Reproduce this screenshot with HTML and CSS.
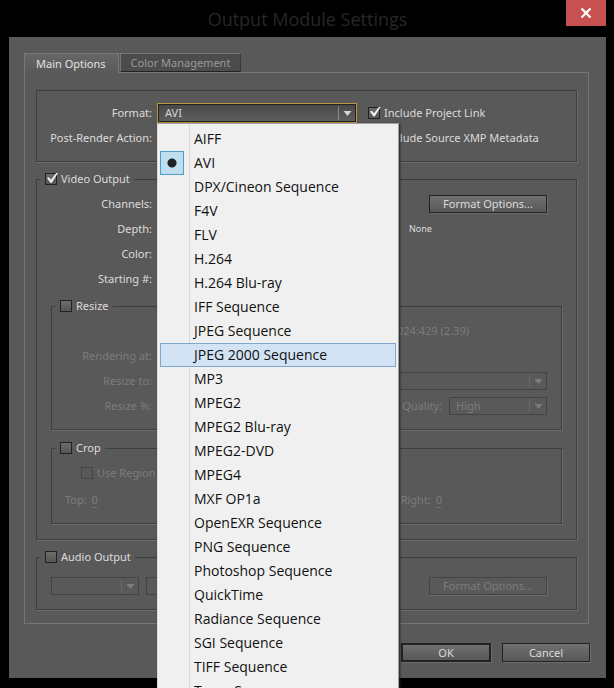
FILE: index.html
```html
<!DOCTYPE html>
<html lang="en">
<head>
<meta charset="utf-8">
<title>Output Module Settings</title>
<link rel="stylesheet" href="styles.css">
</head>
<body>
<svg class="defs" width="0" height="0" aria-hidden="true">
  <symbol id="arrow" viewBox="0 0 18 16">
    <path d="M0.5 1v14" stroke="currentColor" opacity=".4" fill="none"/>
    <path d="M5.5 6h8l-4 5z" fill="currentColor"/>
  </symbol>
</svg>
<main class="window">
  <header class="titlebar">
    <h1>Output Module Settings</h1>
    <button class="close" aria-label="Close">
      <svg width="12" height="10" viewBox="0 0 12 10"><path d="M1.5 0.5l9 9M10.5 0.5l-9 9" stroke="#fff" stroke-width="2.2"/></svg>
    </button>
  </header>
  <form class="dialog">
    <div class="tabs" role="tablist">
      <button type="button" class="tab active" role="tab" aria-selected="true">Main Options</button>
      <button type="button" class="tab" role="tab" aria-selected="false">Color Management</button>
    </div>
    <section class="panel">
      <div class="group first">
        <div class="row">
          <label class="name" for="format">Format:</label>
          <div class="picker">
            <div class="drop focus">
              <select id="format"><option>AVI</option></select>
              <svg class="arrow"><use href="#arrow"/></svg>
            </div>
            <ul class="menu">
              <li><button type="button">AIFF</button></li>
              <li><button type="button" class="current">AVI</button></li>
              <li><button type="button">DPX/Cineon Sequence</button></li>
              <li><button type="button">F4V</button></li>
              <li><button type="button">FLV</button></li>
              <li><button type="button">H.264</button></li>
              <li><button type="button">H.264 Blu-ray</button></li>
              <li><button type="button">IFF Sequence</button></li>
              <li><button type="button">JPEG Sequence</button></li>
              <li><button type="button" class="hover">JPEG 2000 Sequence</button></li>
              <li><button type="button">MP3</button></li>
              <li><button type="button">MPEG2</button></li>
              <li><button type="button">MPEG2 Blu-ray</button></li>
              <li><button type="button">MPEG2-DVD</button></li>
              <li><button type="button">MPEG4</button></li>
              <li><button type="button">MXF OP1a</button></li>
              <li><button type="button">OpenEXR Sequence</button></li>
              <li><button type="button">PNG Sequence</button></li>
              <li><button type="button">Photoshop Sequence</button></li>
              <li><button type="button">QuickTime</button></li>
              <li><button type="button">Radiance Sequence</button></li>
              <li><button type="button">SGI Sequence</button></li>
              <li><button type="button">TIFF Sequence</button></li>
              <li><button type="button">Targa Sequence</button></li>
            </ul>
          </div>
          <label class="check"><input type="checkbox" checked>Include Project Link</label>
        </div>
        <div class="row">
          <span class="name">Post-Render Action:</span>
          <div class="picker"></div>
          <label class="check"><input type="checkbox" checked>Include Source XMP Metadata</label>
        </div>
      </div>

      <fieldset class="group video">
        <legend><label class="check"><input type="checkbox" checked>Video Output</label></legend>
        <div class="row"><span class="name">Channels:</span><div class="side"><button type="button" class="btn wide">Format Options...</button></div></div>
        <div class="row"><span class="name">Depth:</span><div class="side small">None</div></div>
        <div class="row"><span class="name">Color:</span></div>
        <div class="row"><span class="name">Starting #:</span></div>

        <fieldset class="group inner resize">
          <legend><label class="check"><input type="checkbox">Resize</label></legend>
          <div class="row"><span class="ratio">1024:429 (2.39)</span></div>
          <div class="row"><span class="name">Rendering at:</span></div>
          <div class="row">
            <label class="name" for="size">Resize to:</label>
            <div class="drop fill"><select id="size" disabled><option></option></select><svg class="arrow"><use href="#arrow"/></svg></div>
          </div>
          <div class="row">
            <span class="name">Resize %:</span>
            <label class="quality" for="quality">Quality:</label>
            <div class="drop short"><select id="quality" disabled><option>High</option></select><svg class="arrow"><use href="#arrow"/></svg></div>
          </div>
        </fieldset>

        <fieldset class="group inner crop">
          <legend><label class="check"><input type="checkbox">Crop</label></legend>
          <div class="row region"><label class="check"><input type="checkbox" disabled>Use Region</label></div>
          <div class="row edges">
            <span>Top: <span class="value">0</span></span>
            <span>Right: <span class="value">0</span></span>
          </div>
        </fieldset>
      </fieldset>

      <fieldset class="group audio">
        <legend><label class="check"><input type="checkbox">Audio Output</label></legend>
        <div class="row">
          <div class="drop rate"><select disabled aria-label="Sample rate"><option></option></select><svg class="arrow"><use href="#arrow"/></svg></div>
          <div class="drop rate"><select disabled aria-label="Bit depth"><option></option></select></div>
          <div class="side"><button type="button" class="btn wide" disabled>Format Options...</button></div>
        </div>
      </fieldset>
    </section>
    <footer class="actions">
      <button type="button" class="btn default">OK</button>
      <button type="button" class="btn">Cancel</button>
    </footer>
  </form>
</main>
</body>
</html>
```
FILE: styles.css
```css
*, *::before, *::after { box-sizing: border-box; }

body {
  margin: 0;
  height: 100vh;
  overflow: hidden;
  background: #000;
  color: #dcdcdc;
  font: 11px/18px "Noto Sans", "Open Sans", sans-serif;
}

button, select, input { font: inherit; color: inherit; margin: 0; }
.defs { position: absolute; }

.window { padding: 0 8px 0 9px; }

.titlebar {
  position: relative;
  height: 37px;
  display: flex;
  align-items: center;
  justify-content: center;
}
h1 { margin: 0; font: 400 18px/24px "Open Sans", sans-serif; color: #272727; }
.close {
  position: absolute;
  top: 0;
  right: 0;
  width: 40px;
  height: 26px;
  padding: 0;
  border: 0;
  background: #c75050;
  display: grid;
  place-items: center;
}

.dialog { background: #595959; padding: 16px 16px 16px 15px; }

.tabs { display: flex; align-items: flex-start; gap: 1px; }
.tab {
  height: 19px;
  padding: 0 10px;
  border: 1px solid #777;
  border-color: #777 #3a3a3a #222 #777;
  background: #4c4c4c;
  color: #9a9a9a;
  line-height: 16px;
}
.tab.active {
  height: 20px;
  margin-bottom: -1px;
  padding: 0 12px 0 11px;
  position: relative;
  border-color: #777;
  border-bottom: 0;
  background: linear-gradient(#666, #595959);
  color: #e2e2e2;
}

.panel { margin-right: 1px; border: 1px solid #757575; padding: 17px 11px 13px; }

.group {
  margin: 0;
  min-width: 0;
  padding: 0;
  border: 1px solid #3e3e3e;
  box-shadow: 1px 1px 0 #6c6c6c;
}
.first { padding: 9px 0 11px; }
.video { margin-top: 8px; padding: 3px 14px 15px 14px; }
.video > .row { margin-left: -14px; padding-right: 15px; }
.inner { padding: 3px 14px 11px 0; color: #7c7c7c; }
.resize { margin-top: 6px; }
.crop { margin-top: 9px; }
.audio { margin-top: 8px; padding: 7px 29px 11px 14px; }

legend { margin-left: 3px; padding: 0 4px 0 5px; height: 18px; color: #dcdcdc; }
.video > legend, .audio > legend { margin-left: -11px; }

.row { display: flex; align-items: center; height: 25px; gap: 5px; }
.name { flex: 0 0 115px; text-align: right; white-space: nowrap; }
.inner .name { flex-basis: 100px; }
.picker { position: relative; flex: 0 0 200px; }

.check { display: flex; align-items: center; gap: 4px; white-space: nowrap; }
.picker + .check { margin-left: 6px; }
input[type="checkbox"] {
  appearance: none;
  width: 12px;
  height: 12px;
  border: 1px solid #222;
  background: linear-gradient(#6c6c6c, #565656);
  position: relative;
}
input[type="checkbox"]:checked::after {
  content: "";
  position: absolute;
  left: 1px;
  top: -1px;
  width: 11px;
  height: 10px;
  background: #eee;
  clip-path: polygon(0 50%, 18% 42%, 36% 68%, 84% 0, 100% 0, 42% 100%, 32% 100%);
}
input[type="checkbox"]:disabled { border-color: #454545; background: none; }

.drop { position: relative; color: #d6d6d6; }
.drop select {
  display: block;
  appearance: none;
  width: 100%;
  height: 18px;
  padding: 0 20px 0 6px;
  border: 1px solid #222;
  border-radius: 0;
  background: linear-gradient(#484848, #5e5e5e);
  line-height: 16px;
  opacity: 1;
}
.drop select:disabled { background: none; border-color: #434343; color: #7c7c7c; }
.drop:has(select:disabled) { color: #7c7c7c; }
.arrow { position: absolute; right: 0; top: 1px; width: 18px; height: 16px; pointer-events: none; }
.focus { outline: 1px solid #b8963c; outline-offset: 0; margin: 0 1px; }
.fill { flex: 1; }
.quality { margin-left: auto; }
.short { flex: 0 0 98px; margin-left: 2px; }
.rate { flex: 0 0 88px; }
.audio .row { gap: 7px; }

.side { margin-left: auto; flex: 0 0 138px; display: flex; justify-content: flex-end; }
.small { justify-content: flex-start; font-size: 9px; }
.ratio { margin-left: auto; padding-right: 78px; }
.region { padding-left: 29px; }
.edges { margin-top: 2px; padding: 0 105px 0 13px; justify-content: space-between; }
.value { border-bottom: 1px dotted #7c7c7c; margin-left: 2px; }

.btn {
  width: 88px;
  height: 19px;
  padding: 0;
  border: 1px solid #222;
  background: linear-gradient(#707070, #585858);
  box-shadow: 1px 1px 0 #6c6c6c;
  line-height: 16px;
}
.btn.wide { width: 118px; height: 18px; }
.btn:disabled { background: none; border-color: #434343; color: #7c7c7c; }
.btn.default { width: 90px; border-width: 2px; line-height: 14px; }
.actions { display: flex; justify-content: flex-end; gap: 11px; margin-top: 19px; }

.menu {
  position: absolute;
  z-index: 2;
  top: 100%;
  left: 0;
  width: 242px;
  margin: 1px 0 0;
  padding: 3px 2px;
  list-style: none;
  border: 1px solid #a0a0a0;
  border-left-color: #dadada;
  background: linear-gradient(90deg, transparent 31px, #dadada 31px, #dadada 32px, transparent 32px) #f0f0f0;
  box-shadow: 1px 1px 2px #222;
  color: #111;
  font: 14px/22px "Open Sans", sans-serif;
}
.menu button {
  position: relative;
  display: block;
  width: 100%;
  height: 24px;
  padding: 0 0 0 33px;
  border: 1px solid transparent;
  background: none;
  text-align: left;
}
.menu .hover { background: #d1e3f4; border-color: #7fa8cf; }
.current::before {
  content: "";
  position: absolute;
  left: -1px;
  top: -1px;
  width: 24px;
  height: 24px;
  border: 1px solid #4f9fc4;
  background: radial-gradient(circle, #1c2226 4px, #bfdff0 5px);
}
```
